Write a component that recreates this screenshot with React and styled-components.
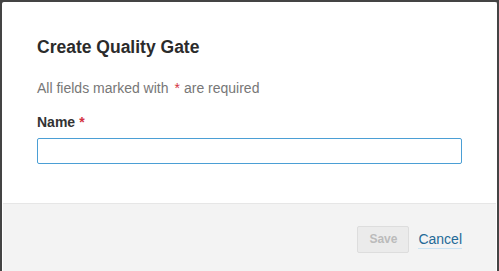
import React from 'react';
import styled, { createGlobalStyle } from 'styled-components';

const GlobalStyle = createGlobalStyle`
  html, body {
    margin: 0;
    height: 100%;
    overflow: hidden;
    background: #444;
  }
  body {
    font-family: "Liberation Sans", Arial, Helvetica, sans-serif;
    color: #333;
  }
  #root {
    height: 100%;
  }
`;

const Modal = styled.div`
  box-sizing: border-box;
  margin: 2px 2px 0 2px;
  height: calc(100% - 2px);
  background: #fff;
  border: 1px solid #fff;
  border-bottom: none;
  border-radius: 2px 2px 0 0;
  display: flex;
  flex-direction: column;
`;

const Header = styled.header`
  padding: 32px 34px 0;
`;

const Title = styled.h2`
  margin: 0;
  font-size: 17.5px;
  line-height: 24px;
  font-weight: bold;
  color: #2b2b2b;
`;

const Body = styled.div`
  padding: 19px 34px 0;
`;

const Hint = styled.p`
  margin: 0;
  font-size: 14px;
  line-height: 20px;
  color: #777;
`;

const Required = styled.em`
  font-style: normal;
  color: #d4333f;
  margin: 0 ${(p) => (p.$spaced ? '4px' : '0')} 0 ${(p) => (p.$spaced ? '6px' : '4px')};
`;

const Field = styled.div`
  margin-top: 14px;
`;

const Label = styled.label`
  display: block;
  font-size: 14px;
  line-height: 20px;
  font-weight: bold;
  color: #333;
`;

const Input = styled.input`
  display: block;
  box-sizing: border-box;
  width: 100%;
  height: 26px;
  margin-top: 6px;
  padding: 0 6px;
  border: 1px solid #4b9fd5;
  border-radius: 2px;
  font-family: inherit;
  font-size: 14px;
  outline: none;
`;

const Footer = styled.footer`
  flex: 1;
  margin-top: 39px;
  border-top: 1px solid #e6e6e6;
  background: #f3f3f3;
  padding: 22px 34px 0;
  display: flex;
  justify-content: flex-end;
  align-items: flex-start;
`;

const Actions = styled.div`
  display: flex;
  align-items: center;
  gap: 9px;
`;

const Button = styled.button`
  box-sizing: border-box;
  height: 27px;
  padding: 0 11px;
  border: 1px solid #ddd;
  border-radius: 2px;
  background: #ebebeb;
  color: #bbb;
  font-family: inherit;
  font-size: 12px;
  font-weight: bold;
  line-height: 25px;
  cursor: not-allowed;
`;

const LinkButton = styled.a`
  font-size: 14px;
  line-height: 18px;
  color: #236a97;
  text-decoration: none;
  border-bottom: 1px solid #cae3f2;
  cursor: pointer;
`;

export default function App() {
  return (
    <>
      <GlobalStyle />
      <Modal>
        <Header>
          <Title>Create Quality Gate</Title>
        </Header>
        <Body>
          <Hint>
            All fields marked with<Required $spaced>*</Required>are required
          </Hint>
          <Field>
            <Label htmlFor="quality-gate-name">
              Name<Required>*</Required>
            </Label>
            <Input id="quality-gate-name" type="text" />
          </Field>
        </Body>
        <Footer>
          <Actions>
            <Button disabled>Save</Button>
            <LinkButton>Cancel</LinkButton>
          </Actions>
        </Footer>
      </Modal>
    </>
  );
}
